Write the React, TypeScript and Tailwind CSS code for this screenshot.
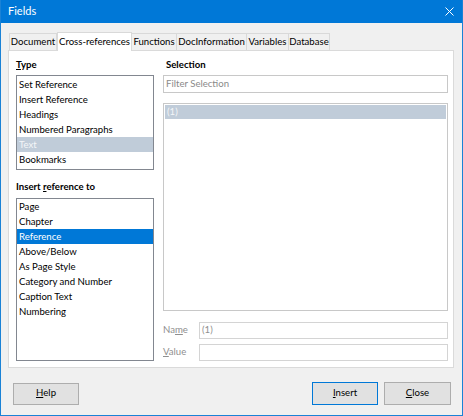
import React from "react";

const U = ({ children }: { children: React.ReactNode }) => <span className="underline underline-offset-[1px]">{children}</span>;

const typeItems = ["Set Reference", "Insert Reference", "Headings", "Numbered Paragraphs", "Text", "Bookmarks"];
const refItems = ["Page", "Chapter", "Reference", "Above/Below", "As Page Style", "Category and Number", "Caption Text", "Numbering"];
const tabs = ["Document", "Cross-references", "Functions", "DocInformation", "Variables", "Database"];
const tabW = [48, 75, 46, 71, 43, 42];

export default function App() {
  return (
    <div className="w-[463px] h-[416px] bg-[#f0f0f0] flex flex-col border-x border-b border-[#1a82d6] text-[9.6px] text-black overflow-hidden" style={{ fontFamily: "Lato, 'Noto Sans', sans-serif" }}>
      <div className="h-[23px] bg-[#0078d7] -mx-px flex items-center justify-between pl-[8px] pr-[8px] text-white text-[11px]">
        <span>Fields</span>
        <svg width="9" height="9" viewBox="0 0 9 9" className="mr-[1px]">
          <path d="M0.5 0.5L8.5 8.5M8.5 0.5L0.5 8.5" stroke="white" strokeWidth="1" />
        </svg>
      </div>
      <div className="flex flex-col pl-[7px] pr-[8px]">
        <div className="flex items-end h-[27px] pl-[1px]">
          {tabs.map((t, i) =>
            i === 1 ? (
              <div key={t} style={{ width: tabW[i] }} className="h-[19px] -mb-px bg-white border border-b-0 border-[#d9d9d9] flex items-center justify-center z-10 leading-none whitespace-nowrap">{t}</div>
            ) : (
              <div key={t} style={{ width: tabW[i] }} className="h-[17px] bg-[#f0f0f0] border border-b-0 border-[#d9d9d9] -ml-px first:ml-0 flex items-center justify-center leading-none whitespace-nowrap">{t}</div>
            )
          )}
        </div>
        <div className="h-[318px] bg-white border border-[#dadada] flex pl-[7px] pr-[5px] pt-[7px] gap-[9px]">
          <div className="w-[138px] flex flex-col">
            <div className="h-[14px] leading-[14px] font-bold"><U>T</U>ype</div>
            <div className="mt-[3px] h-[95px] border border-[#828790] pt-[1px] flex flex-col">
              {typeItems.map((t) => (
                <div key={t} className={"h-[15px] leading-[15px] pl-[2px] " + (t === "Text" ? "bg-[#c0ccd9] text-[#f4f6f8]" : "")}>{t}</div>
              ))}
            </div>
            <div className="mt-[10px] h-[14px] leading-[14px] font-bold">Insert <U>r</U>eference to</div>
            <div className="mt-[4px] h-[163px] border border-[#828790] flex flex-col">
              {refItems.map((t) => (
                <div key={t} className={"h-[15px] leading-[15px] pl-[2px] " + (t === "Reference" ? "bg-[#0078d7] text-white" : "")}>{t}</div>
              ))}
            </div>
          </div>
          <div className="flex-1 flex flex-col">
            <div className="h-[14px] leading-[14px] font-bold pl-[3px]">Selection</div>
            <div className="mt-[3px] h-[18px] border border-[#c8c8c8] flex items-center pl-[2px] text-[#8a8a8a]">Filter Selection</div>
            <div className="mt-[10px] h-[208px] border border-[#c8c8c8] pt-px px-px">
              <div className="h-[14px] leading-[14px] bg-[#c0ccd9] text-[#f4f6f8] pl-[2px]">(1)</div>
            </div>
            <div className="mt-[11px] flex items-center h-[17px]">
              <span className="w-[36px] text-[#8f8f8f]">Na<U>m</U>e</span>
              <div className="flex-1 h-[17px] border border-[#d4d4d4] flex items-center pl-[2px] text-[#8f8f8f]">(1)</div>
            </div>
            <div className="mt-[5px] flex items-center h-[17px]">
              <span className="w-[36px] text-[#8f8f8f]"><U>V</U>alue</span>
              <div className="flex-1 h-[17px] border border-[#d4d4d4]" />
            </div>
          </div>
        </div>
        <div className="mt-[14px] flex items-center h-[23px] pl-[5px] pr-[3px]">
          <div className="w-[66px] h-[22px] bg-[#e1e1e1] border border-[#adadad] flex items-center justify-center"><U>H</U>elp</div>
          <div className="flex-1" />
          <div className="w-[66px] h-[23px] bg-[#e1e1e1] border border-[#0078d7] flex items-center justify-center"><U>I</U>nsert</div>
          <div className="w-[67px] h-[23px] ml-[6px] bg-[#e1e1e1] border border-[#adadad] flex items-center justify-center"><U>C</U>lose</div>
        </div>
      </div>
    </div>
  );
}
